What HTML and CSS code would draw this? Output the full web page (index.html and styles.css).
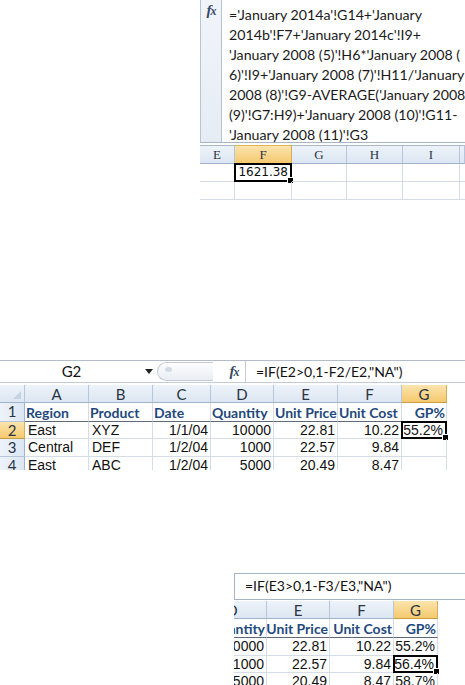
FILE: index.html
```html
<!DOCTYPE html>
<html lang="en">
<head>
    <meta charset="UTF-8">
    <title>Excel formula screenshots</title>
    <link rel="stylesheet" href="styles.css">
</head>
<body>
<div class="page">

    <!-- long multi-sheet formula -->
    <section class="shot shot-one">
        <div class="fbar fbar-tall">
            <div class="fx"><span>f</span><span class="x">x</span></div>
            <div class="ftext">
                <div>='January 2014a'!G14+'January</div>
                <div>2014b'!F7+'January 2014c'!I9+</div>
                <div>'January 2008 (5)'!H6*'January 2008 (</div>
                <div>6)'!I9+'January 2008 (7)'!H11/'January</div>
                <div>2008 (8)'!G9-AVERAGE('January 2008</div>
                <div>(9)'!G7:H9)+'January 2008 (10)'!G11-</div>
                <div>'January 2008 (11)'!G3</div>
            </div>
        </div>
        <div class="grid grid-one">
            <div class="hd serif">E</div>
            <div class="hd serif on">F</div>
            <div class="hd serif">G</div>
            <div class="hd serif">H</div>
            <div class="hd serif">I</div>
            <div class="hd serif"></div>

            <div class="c"></div>
            <div class="c num sel mono">1621.38<i class="handle"></i></div>
            <div class="c"></div>
            <div class="c"></div>
            <div class="c"></div>
            <div class="c"></div>

            <div class="c"></div>
            <div class="c"></div>
            <div class="c"></div>
            <div class="c"></div>
            <div class="c"></div>
            <div class="c"></div>
        </div>
    </section>

    <!-- GP% table, G2 selected -->
    <section class="shot shot-two">
        <div class="namebar">
            <div class="namebox">G2<span class="drop"></span></div>
            <div class="pill"><span class="dot"></span></div>
            <div class="fx fx-flat"><span>f</span><span class="x">x</span></div>
            <div class="finput">=IF(E2&gt;0,1-F2/E2,"NA")</div>
        </div>
        <div class="grid grid-two">
            <div class="hd corner"><span class="tri"></span></div>
            <div class="hd">A</div>
            <div class="hd">B</div>
            <div class="hd">C</div>
            <div class="hd">D</div>
            <div class="hd">E</div>
            <div class="hd">F</div>
            <div class="hd on">G</div>
            <div class="blank"></div>

            <div class="rh">1</div>
            <div class="c head">Region</div>
            <div class="c head">Product</div>
            <div class="c head">Date</div>
            <div class="c head">Quantity</div>
            <div class="c head">Unit Price</div>
            <div class="c head">Unit Cost</div>
            <div class="c head num">GP%</div>
            <div class="blank"></div>

            <div class="rh on">2</div>
            <div class="c">East</div>
            <div class="c">XYZ</div>
            <div class="c num">1/1/04</div>
            <div class="c num">10000</div>
            <div class="c num">22.81</div>
            <div class="c num">10.22</div>
            <div class="c num sel">55.2%<i class="handle"></i></div>
            <div class="blank"></div>

            <div class="rh">3</div>
            <div class="c">Central</div>
            <div class="c">DEF</div>
            <div class="c num">1/2/04</div>
            <div class="c num">1000</div>
            <div class="c num">22.57</div>
            <div class="c num">9.84</div>
            <div class="c num"></div>
            <div class="blank"></div>

            <div class="rh">4</div>
            <div class="c">East</div>
            <div class="c">ABC</div>
            <div class="c num">1/2/04</div>
            <div class="c num">5000</div>
            <div class="c num">20.49</div>
            <div class="c num">8.47</div>
            <div class="c num"></div>
            <div class="blank"></div>
        </div>
    </section>

    <!-- same table, G3 selected -->
    <section class="shot shot-three">
        <div class="fbar fbar-short">
            <div class="finput">=IF(E3&gt;0,1-F3/E3,"NA")</div>
        </div>
        <div class="grid grid-three">
            <div class="hd cut">D</div>
            <div class="hd">E</div>
            <div class="hd">F</div>
            <div class="hd on">G</div>
            <div class="blank"></div>

            <div class="c head num">Quantity</div>
            <div class="c head num">Unit Price</div>
            <div class="c head num">Unit Cost</div>
            <div class="c head num">GP%</div>
            <div class="blank"></div>

            <div class="c num">10000</div>
            <div class="c num">22.81</div>
            <div class="c num">10.22</div>
            <div class="c num">55.2%</div>
            <div class="blank"></div>

            <div class="c num">1000</div>
            <div class="c num">22.57</div>
            <div class="c num">9.84</div>
            <div class="c num sel">56.4%<i class="handle"></i></div>
            <div class="blank"></div>

            <div class="c num">5000</div>
            <div class="c num">20.49</div>
            <div class="c num">8.47</div>
            <div class="c num">58.7%</div>
            <div class="blank"></div>
        </div>
    </section>

</div>
</body>
</html>
```

FILE: styles.css
```css
body {
    margin: 0;
    background: #fff;
    font-family: "Liberation Sans", Arial, sans-serif;
    color: #111;
}

.page {
    width: 465px;
    height: 685px;
    overflow: hidden;
}

.shot {
    overflow: hidden;
}

.shot-one {
    margin-left: 200px;
    height: 200px;
}

.shot-two {
    margin-top: 160px;
    height: 110px;
}

.shot-three {
    margin-top: 103px;
    margin-left: 234px;
    height: 112px;
}

/* formula bar */
.fbar {
    display: flex;
    background: #fff;
}

.fbar-tall {
    height: 142px;
    border-left: 1px solid #b9c4d3;
    border-bottom: 1px solid #a7b4c6;
    margin-bottom: 2px;
    overflow: hidden;
}

.fbar-short {
    height: 25px;
    border-top: 1px solid #a7b4c6;
    border-left: 1px solid #a7b4c6;
    border-bottom: 1px solid #a7b4c6;
    margin-bottom: 1px;
}

.fx {
    width: 20px;
    flex: none;
    background: linear-gradient(#f1f5fa, #e6ecf4);
    border-right: 1px solid #b6c3d4;
    text-align: center;
    font-family: "Liberation Serif", serif;
    font-style: italic;
    font-weight: bold;
    font-size: 15px;
    line-height: 20px;
    color: #394a68;
    letter-spacing: -1px;
}

.fx .x {
    font-size: 12px;
}

.fx-flat {
    background: none;
    border-right: 1px solid #c4ccd8;
    width: 22px;
    margin-left: 10px;
    line-height: 21px;
}

.ftext {
    padding: 5px 0 0 7px;
    font-family: Lato, "Open Sans", sans-serif;
    font-size: 14.2px;
    line-height: 20px;
    color: #1a1a1a;
    white-space: nowrap;
}

.finput {
    flex: 1;
    padding-left: 10px;
    font-family: Lato, "Open Sans", sans-serif;
    font-size: 14px;
    line-height: 23px;
    color: #111;
    white-space: nowrap;
}

/* name box row */
.namebar {
    display: flex;
    height: 21px;
    border-top: 1px solid #b2bccb;
    border-bottom: 1px solid #c2cbd8;
    margin-bottom: 2px;
}

.namebox {
    width: 157px;
    flex: none;
    padding-right: 14px;
    box-sizing: border-box;
    text-align: center;
    font-family: Lato, "Open Sans", sans-serif;
    font-size: 15px;
    line-height: 21px;
    position: relative;
}

.namebar .finput {
    line-height: 21px;
}

.drop {
    position: absolute;
    right: 4px;
    top: 8px;
    border-left: 4px solid transparent;
    border-right: 4px solid transparent;
    border-top: 5px solid #222;
}

.pill {
    width: 55px;
    flex: none;
    margin: 1px 0;
    border: 1px solid #c4cbd6;
    border-right: none;
    border-radius: 10px 0 0 10px;
    background: linear-gradient(#fdfdfe, #e9edf3);
    position: relative;
}

.dot {
    position: absolute;
    left: 7px;
    top: 4px;
    width: 7px;
    height: 5px;
    border-radius: 50%;
    background: #d5dae2;
}

/* grids */
.grid {
    display: grid;
}

.grid-one {
    grid-template-columns: 35px 57px 55px 56px 57px 5px;
    grid-template-rows: 19px 18px 18px;
}

.grid-two {
    grid-template-columns: 25px 64px 64px 58px 63px 64px 64px 45px 18px;
    grid-template-rows: 18px 19px 17px 18px 18px;
}

.grid-three {
    grid-template-columns: 33px 63px 64px 44px 27px;
    grid-template-rows: 18px 19px 18px 17px 18px;
}

.hd {
    background: linear-gradient(#eef3fa, #dce6f2);
    border-right: 1px solid #b4c5dc;
    border-bottom: 1px solid #9fb3cc;
    text-align: center;
    font-family: Lato, "Open Sans", sans-serif;
    font-size: 15px;
    line-height: 18px;
    color: #2b3443;
}

.hd.serif {
    font-family: "Liberation Serif", serif;
    font-size: 13px;
    border-top: 1px solid #a9b8ca;
}

.hd.on,
.rh.on {
    background: linear-gradient(#fbe4ad, #f5c96f);
    border-color: #e0b45a #d9ad57 #c99b45 #e0b45a;
}

.hd.cut {
    text-indent: -36px;
}

.corner {
    position: relative;
}

.tri {
    position: absolute;
    right: 3px;
    bottom: 3px;
    border-left: 8px solid transparent;
    border-bottom: 8px solid #c7d2e0;
}

.rh {
    background: linear-gradient(90deg, #eef3fa, #dce6f2);
    border-right: 1px solid #9fb3cc;
    border-bottom: 1px solid #b4c5dc;
    text-align: center;
    font-family: Lato, "Open Sans", sans-serif;
    font-size: 15px;
    line-height: 17px;
    color: #2b3443;
}

.c {
    display: flex;
    align-items: center;
    border-right: 1px solid #d6dde8;
    border-bottom: 1px solid #d6dde8;
    padding: 0 2px 0 3px;
    font-size: 14px;
    line-height: 17px;
    white-space: nowrap;
    overflow: hidden;
    position: relative;
}

.c.num {
    justify-content: flex-end;
}

.c.mono {
    font-family: "DejaVu Sans", sans-serif;
    font-size: 12px;
}

.c.head {
    font-family: Lato, "Open Sans", sans-serif;
    font-weight: bold;
    font-size: 14px;
    color: #1f497d;
    border-bottom: 1px solid #5e6a7a;
    padding: 0 1px;
}

.blank {
    background: #fff;
}

.c.sel {
    border: 2px solid #000;
    margin: -1px 0 0 -1px;
    line-height: 15px;
    overflow: visible;
}

.handle {
    position: absolute;
    right: -4px;
    bottom: -4px;
    width: 5px;
    height: 5px;
    background: #000;
    border: 1px solid #fff;
}
```
